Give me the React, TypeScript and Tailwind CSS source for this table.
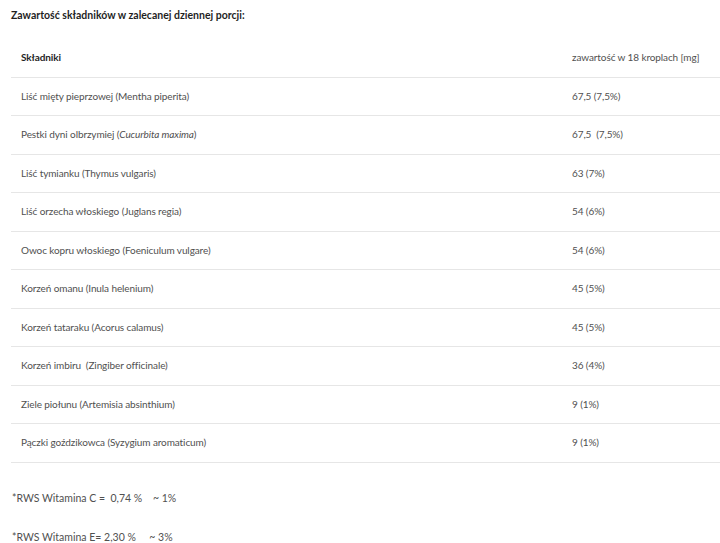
import React from "react";

type Row = { name: React.ReactNode; value: string };

const rows: Row[] = [
  { name: "Liść mięty pieprzowej (Mentha piperita)", value: "67,5 (7,5%)" },
  {
    name: (
      <>
        Pestki dyni olbrzymiej (<i>Cucurbita maxima</i>)
      </>
    ),
    value: "67,5  (7,5%)",
  },
  { name: "Liść tymianku (Thymus vulgaris)", value: "63 (7%)" },
  { name: "Liść orzecha włoskiego (Juglans regia)", value: "54 (6%)" },
  { name: "Owoc kopru włoskiego (Foeniculum vulgare)", value: "54 (6%)" },
  { name: "Korzeń omanu (Inula helenium)", value: "45 (5%)" },
  { name: "Korzeń tataraku (Acorus calamus)", value: "45 (5%)" },
  { name: "Korzeń imbiru  (Zingiber officinale)", value: "36 (4%)" },
  { name: "Ziele piołunu (Artemisia absinthium)", value: "9 (1%)" },
  { name: "Pączki goździkowca (Syzygium aromaticum)", value: "9 (1%)" },
];

const App = () => {
  return (
    <div className="w-[720px] h-[543px] overflow-hidden bg-white pl-[11px] text-[10px] tracking-[-0.1px] text-[#505050] font-['Lato',sans-serif] whitespace-pre">
      {/* naglowek */}
      <p className="pt-[8px] h-[38px] text-[10.5px] tracking-normal font-bold text-[#1f1f1f]">
        Zawartość składników w zalecanej dziennej porcji:
      </p>
      <table className="w-full border-collapse">
        <thead>
          <tr className="h-[39px] border-b border-[#e6e6e6]">
            <th className="text-left font-bold text-[#1f1f1f] pl-[10px] pt-[1px] w-[551px]">Składniki</th>
            <th className="text-left font-normal pl-[10px] pt-[1px]">zawartość w 18 kroplach [mg]</th>
          </tr>
        </thead>
        <tbody>
          {rows.map((item, index) => {
            return (
              <tr key={index} className="h-[38.5px] border-b border-[#e6e6e6]">
                <td className="pl-[10px]">{item.name}</td>
                <td className="pl-[10px]">{item.value}</td>
              </tr>
            );
          })}
        </tbody>
      </table>
      {/* przypisy */}
      <div className="flex flex-col gap-[24px] pt-[28px] pl-[1px] text-[10.5px] tracking-normal">
        <p>*RWS Witamina C =  0,74 %    ~ 1%</p>
        <p>*RWS Witamina E= 2,30 %     ~ 3%</p>
      </div>
    </div>
  );
};

export default App;
